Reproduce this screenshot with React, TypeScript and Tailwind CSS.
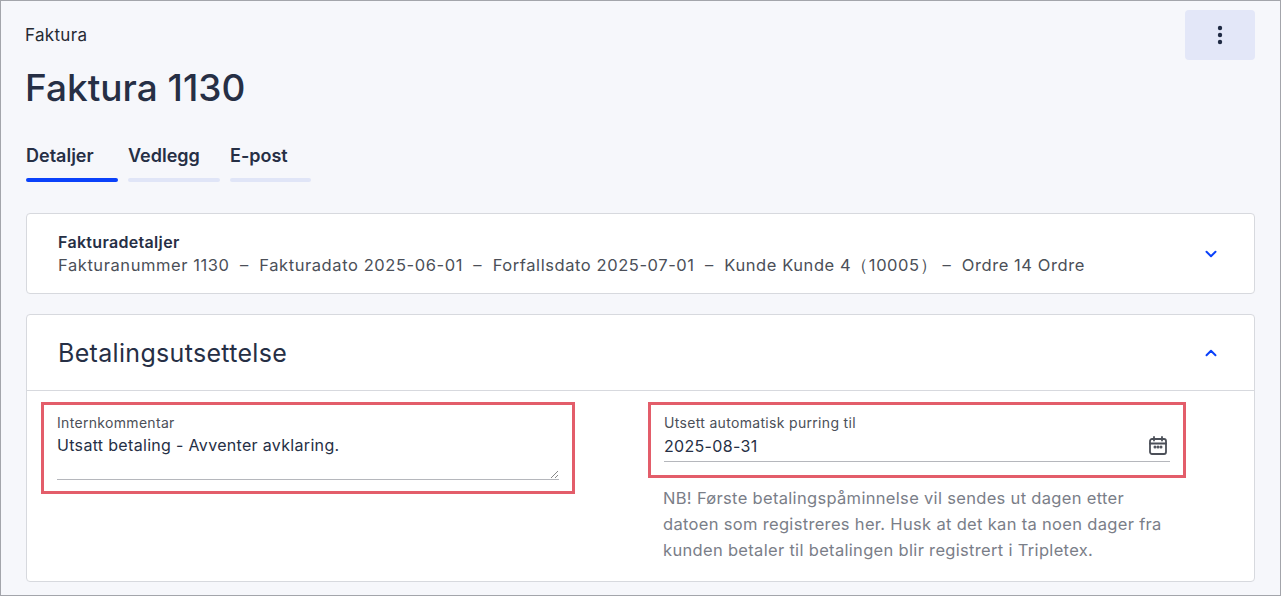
import React from "react";

const Chevron = ({ up }: { up?: boolean }) => (
  <svg width="18" height="18" viewBox="0 0 24 24" fill="none" stroke="#0a41fa" strokeWidth="2.6" strokeLinecap="round" strokeLinejoin="round">
    <path d={up ? "M6 15l6-6 6 6" : "M6 9l6 6 6-6"} />
  </svg>
);

const CalendarIcon = () => (
  <svg width="24" height="24" viewBox="0 0 24 24" fill="none" stroke="#4b4f58" strokeWidth="1.8">
    <rect x="4" y="5" width="16" height="15" rx="2" />
    <path d="M4 9.5h16M8 3v3.5M16 3v3.5" strokeLinecap="round" />
    <circle cx="9" cy="13" r="0.6" fill="#4b4f58" />
    <circle cx="12" cy="13" r="0.6" fill="#4b4f58" />
    <circle cx="15" cy="13" r="0.6" fill="#4b4f58" />
  </svg>
);

const App: React.FC = () => {
  return (
    <div
      className="h-[596px] w-[1281px] overflow-hidden border border-[#a3a5ab] bg-[#f6f7fb] tracking-[0.02em] text-[#1f2a44]"
      style={{ fontFamily: "Inter, 'Noto Sans', sans-serif" }}
    >
      <div className="flex items-start justify-between pl-[24px] pr-[25px] pt-[9px]">
        <div className="pt-[13px] text-[17px] text-[#262a33]">Faktura</div>
        <button className="flex h-[50px] w-[70px] items-center justify-center rounded-[4px] bg-[#e3e7f8]">
          <svg width="6" height="20" viewBox="0 0 6 20" fill="#1f2a44">
            <circle cx="3" cy="3" r="2.2" />
            <circle cx="3" cy="10" r="2.2" />
            <circle cx="3" cy="17" r="2.2" />
          </svg>
        </button>
      </div>
      <h1 className="mt-[6px] pl-[24px] text-[37px] font-medium leading-[44px] tracking-normal text-[#262f45]">Faktura 1130</h1>

      <div className="mt-[34px] flex gap-[10px] pl-[25px]">
        {[
          ["Detaljer", true, "w-[92px]"],
          ["Vedlegg", false, "w-[92px]"],
          ["E-post", false, "w-[81px]"],
        ].map(([t, a, w]) => (
          <div key={t as string} className={`${w as string} flex flex-col`}>
            <span className="text-[18px] font-semibold leading-[24px] tracking-normal text-[#262f45]">{t as string}</span>
            <div className={`mt-[10px] h-[4px] rounded-sm ${a ? "bg-[#0a41fa]" : "bg-[#e0e5f7]"}`} />
          </div>
        ))}
      </div>

      <div className="mx-[25px] mt-[31px] flex h-[81px] items-center justify-between rounded-[4px] border border-[#d7d9de] bg-white pl-[31px] pr-[34px]">
        <div>
          <div className="text-[16px] font-semibold leading-[22px] text-[#262f45]">Fakturadetaljer</div>
          <div className="text-[16.5px] leading-[24px] tracking-[0.035em] text-[#4b4f58]">
            Fakturanummer 1130 &nbsp;– &nbsp;Fakturadato 2025-06-01 &nbsp;– &nbsp;Forfallsdato 2025-07-01 &nbsp;– &nbsp;Kunde Kunde 4（10005） – &nbsp;Ordre 14 Ordre
          </div>
        </div>
        <Chevron />
      </div>

      <div className="mx-[25px] mt-[20px] h-[268px] rounded-[4px] border border-[#d7d9de] bg-white">
        <div className="flex h-[76px] items-center justify-between border-b border-[#d7d9de] pl-[31px] pr-[34px]">
          <span className="text-[25px] leading-[30px] text-[#262f45]">Betalingsutsettelse</span>
          <Chevron up />
        </div>
        <div className="flex pl-[14px] pt-[11px]">
          <div className="h-[92px] w-[534px] border-[3px] border-[#e35d6a] px-[13px] pt-[9px]">
            <div className="text-[14px] leading-[18px] text-[#4b4f58]">Internkommentar</div>
            <div className="relative mt-[2px] h-[46px] border-b border-[#b5b7bc] text-[16px] leading-[22px] text-[#262f45]">
              Utsatt betaling - Avventer avklaring.
              <svg className="absolute bottom-[1px] right-[1px]" width="8" height="8" viewBox="0 0 8 8" stroke="#888" strokeWidth="1">
                <path d="M8 1L1 8M8 5L5 8" />
              </svg>
            </div>
          </div>
          <div className="ml-[73px] flex flex-col">
            <div className="h-[76px] w-[538px] border-[3px] border-[#e35d6a] px-[13px] pt-[9px]">
              <div className="text-[14px] leading-[18px] text-[#4b4f58]">Utsett automatisk purring til</div>
              <div className="flex h-[30px] items-center justify-between border-b border-[#b5b7bc] pb-[2px]">
                <span className="text-[16px] text-[#262f45]">2025-08-31</span>
                <CalendarIcon />
              </div>
            </div>
            <p className="mt-[7px] pl-[15px] text-[16.5px] leading-[26px] text-[#7a7e88]">
              NB! Første betalingspåminnelse vil sendes ut dagen etter<br />
              datoen som registreres her. Husk at det kan ta noen dager fra<br />
              kunden betaler til betalingen blir registrert i Tripletex.
            </p>
          </div>
        </div>
      </div>
    </div>
  );
};

export default App;
